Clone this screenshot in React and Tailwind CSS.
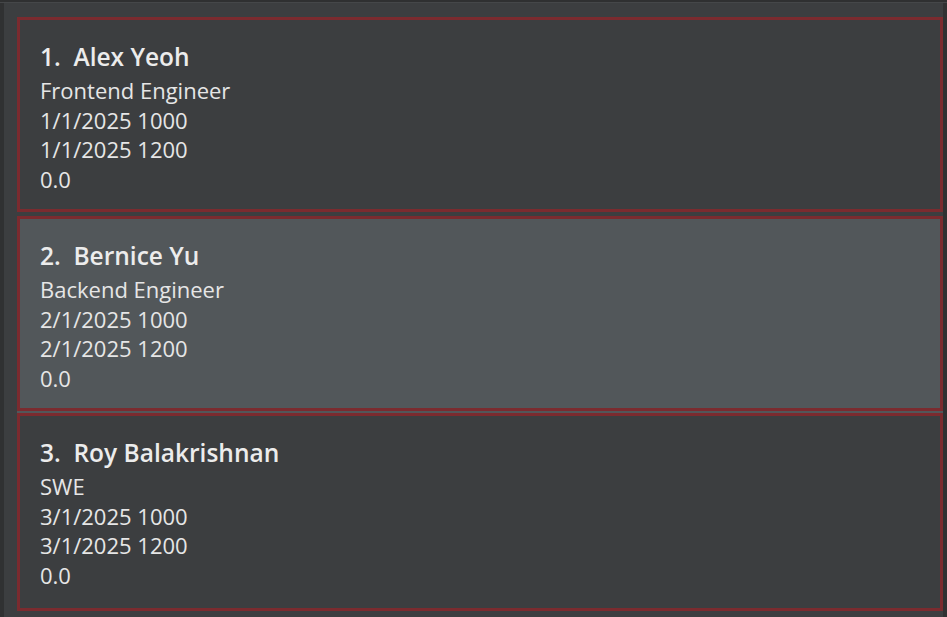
const people = [
  { id: 1, name: 'Alex Yeoh', role: 'Frontend Engineer', start: '1/1/2025 1000', end: '1/1/2025 1200', score: '0.0' },
  { id: 2, name: 'Bernice Yu', role: 'Backend Engineer', start: '2/1/2025 1000', end: '2/1/2025 1200', score: '0.0' },
  { id: 3, name: 'Roy Balakrishnan', role: 'SWE', start: '3/1/2025 1000', end: '3/1/2025 1200', score: '0.0' },
];

const Card = ({ person, selected, tall }) => {
  return (
    <div
      className={`border-[3px] border-[#7b2b2f] pl-[20px] pt-[18px] ${tall ? 'h-[198px]' : 'h-[195px]'} ${
        selected ? 'bg-[#52575a]' : 'bg-[#3c3e40]'
      }`}
    >
      <div className="h-[38px] leading-[38px] text-[24.5px] font-semibold text-[#ececec]">
        {person.id}.&nbsp;&nbsp;{person.name}
      </div>
      <div className="text-[22px] leading-[29.5px] text-[#e6e6e6]">
        <div>{person.role}</div>
        <div>{person.start}</div>
        <div>{person.end}</div>
        <div>{person.score}</div>
      </div>
    </div>
  );
};

export default function App() {
  return (
    <div
      className="w-[947px] h-[617px] bg-[#3c3e40] flex flex-col overflow-hidden"
      style={{ fontFamily: '"Open Sans", "Noto Sans", sans-serif' }}
    >
      <div className="h-[3px] bg-[#2f3031] border-b border-[#454749]" />
      <div className="flex flex-1">
        <div className="w-[4px] bg-[#303132]" />
        <div className="flex-1 flex flex-col pl-[13px]">
          <div className="pt-[14px] pb-[4px]">
            <Card person={people[0]} />
          </div>
          <div className="pb-[2px] bg-[#52575a]">
            <Card person={people[1]} selected />
          </div>
          <div>
            <Card person={people[2]} tall />
          </div>
        </div>
        <div className="w-[4px] bg-[#303132]" />
      </div>
    </div>
  );
}
